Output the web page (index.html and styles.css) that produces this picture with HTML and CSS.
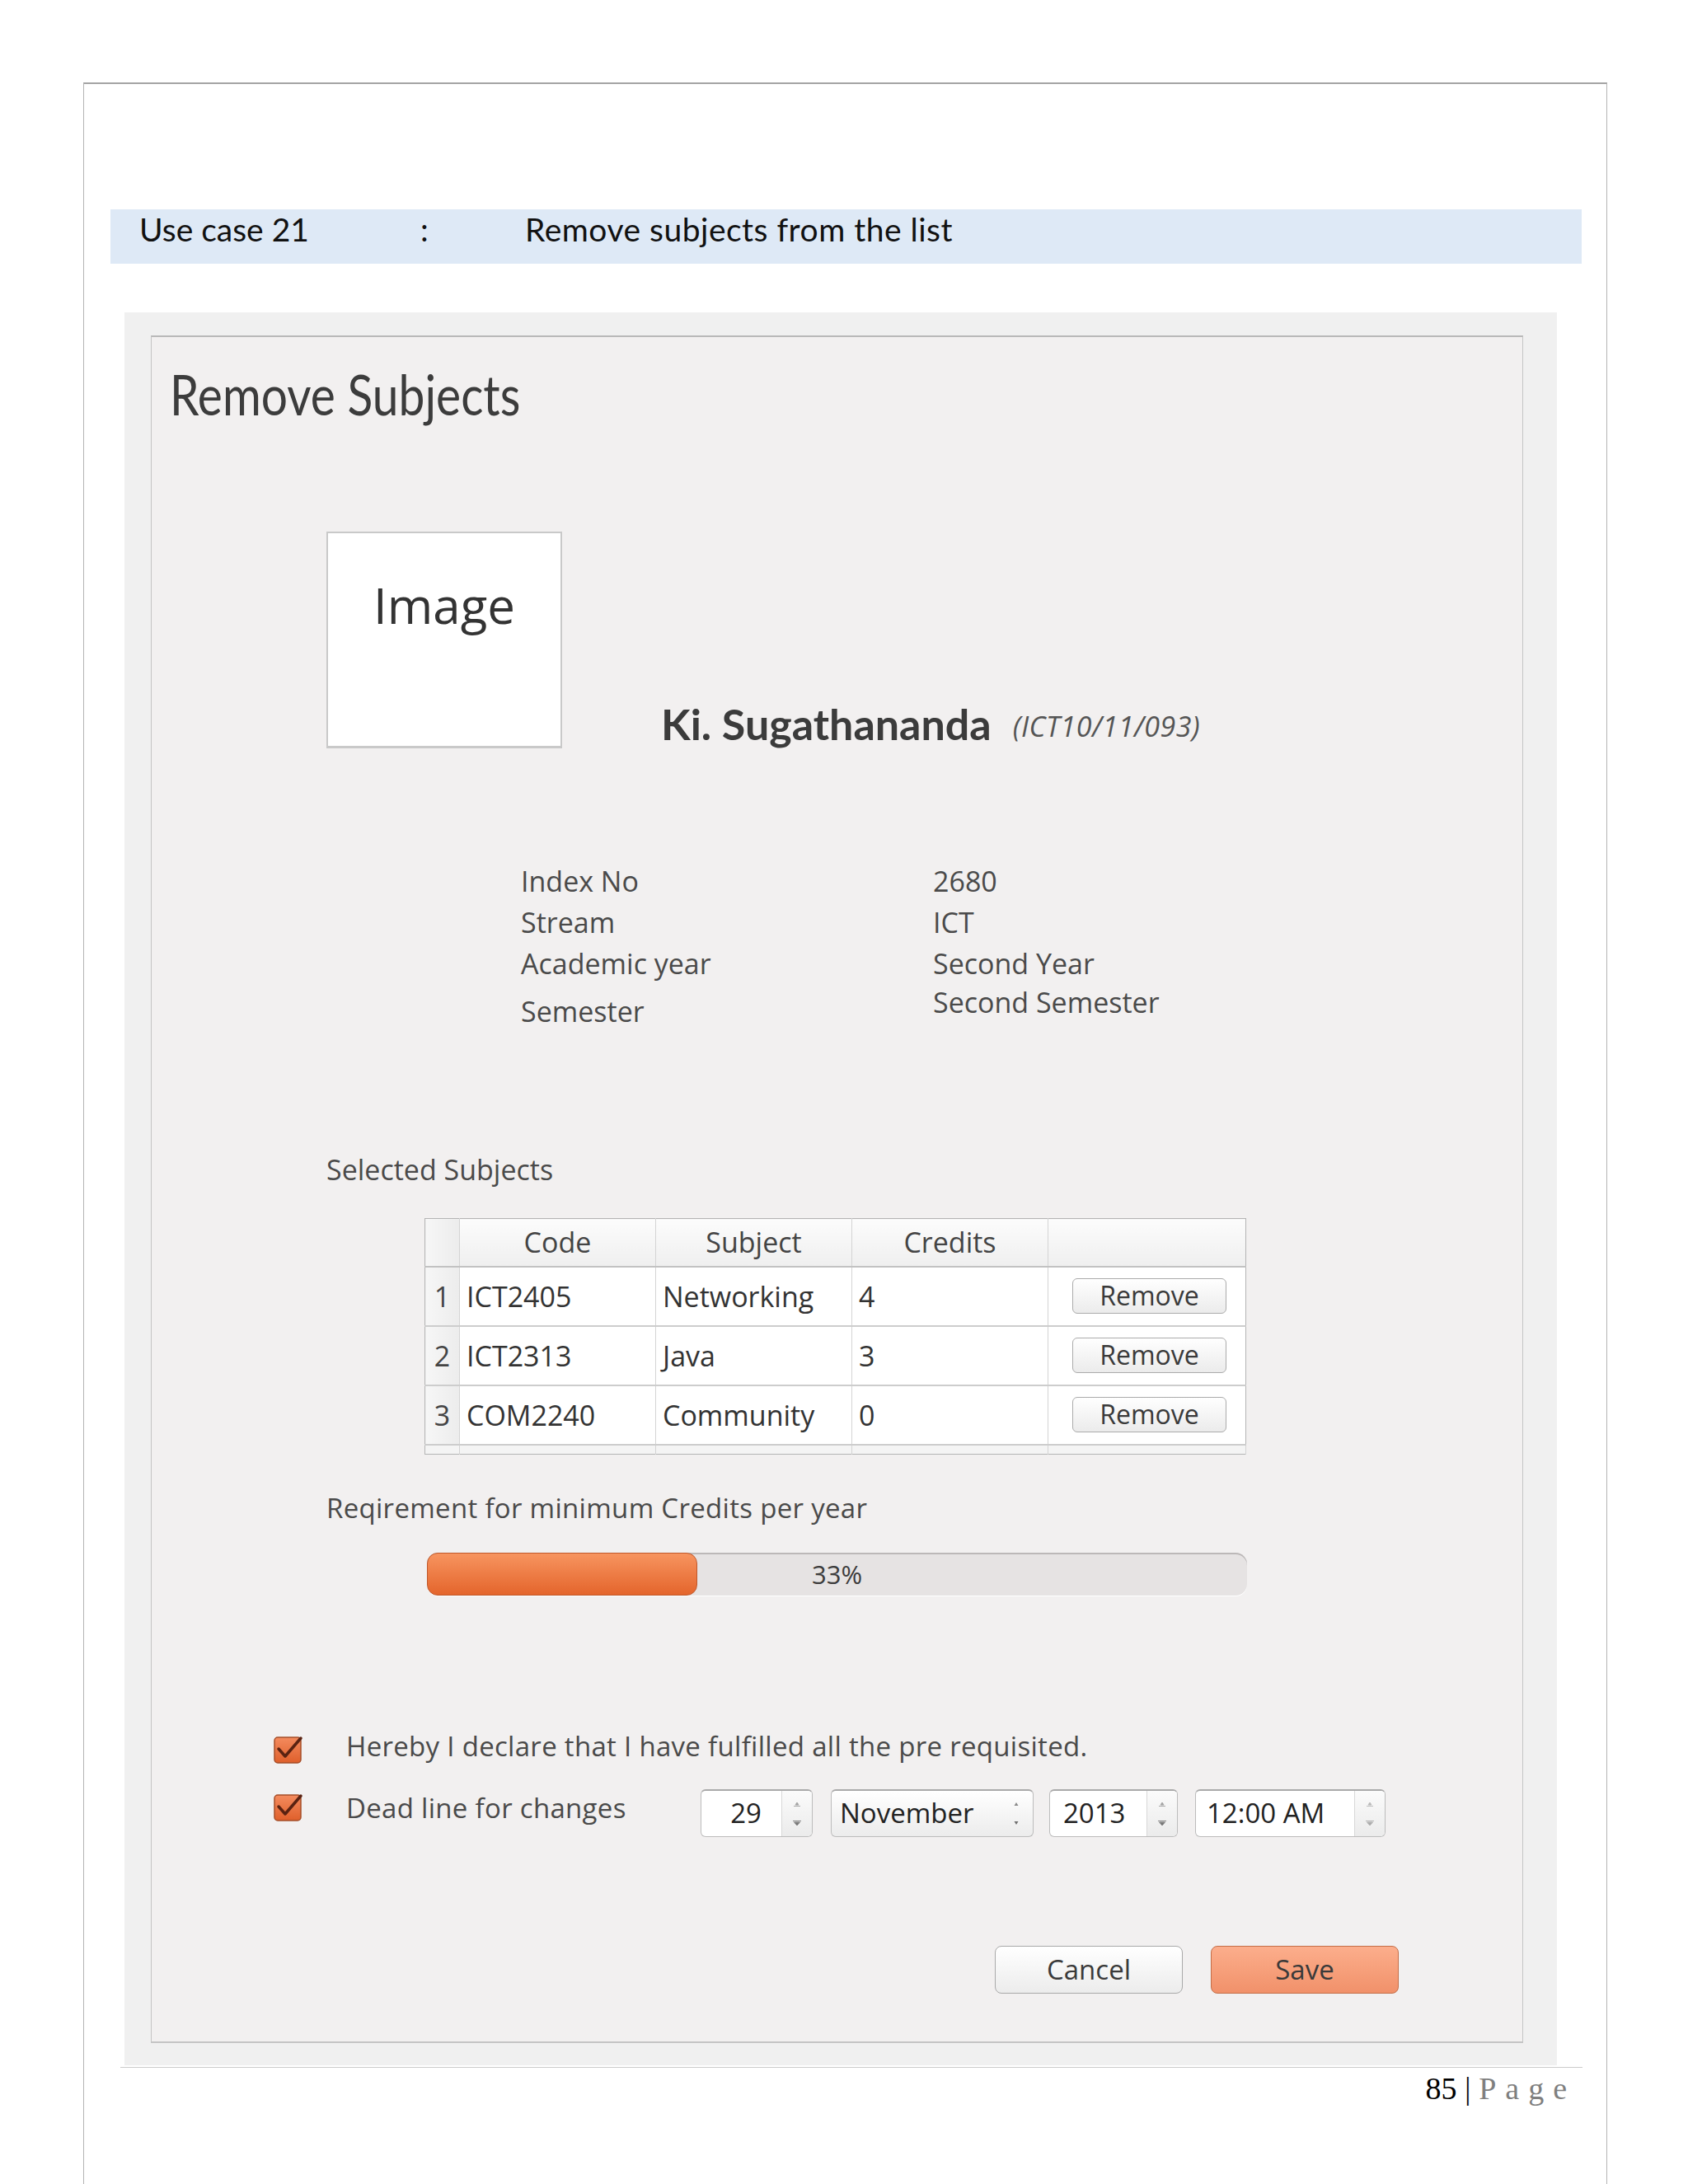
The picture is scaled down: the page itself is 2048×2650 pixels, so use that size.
FILE: index.html
```html
<!DOCTYPE html>
<html>
<head>
<meta charset="utf-8">
<link rel="stylesheet" href="styles.css">
</head>
<body>
<div class="frame">
  <div class="usecase">
    <span class="uc-label">Use case 21</span><span class="uc-colon">:</span><span class="uc-title">Remove subjects from the list</span>
  </div>

  <div class="panel">
    <div class="window">
      <h1 class="title"><span>Remove Subjects</span></h1>

      <div class="profile">
        <div class="photo"><span>Image</span></div>
        <div class="name">Ki. Sugathananda<span class="sid">(ICT10/11/093)</span></div>
      </div>

      <div class="info">
        <div>Index No</div><div>2680</div>
        <div>Stream</div><div>ICT</div>
        <div>Academic year</div><div>Second Year</div>
        <div class="lower">Semester</div><div class="upper">Second Semester</div>
      </div>

      <div class="section-label">Selected Subjects</div>

      <table class="subjects">
        <colgroup>
          <col class="c-num"><col class="c-col"><col class="c-col"><col class="c-col"><col>
        </colgroup>
        <thead>
          <tr><th class="num"></th><th>Code</th><th>Subject</th><th>Credits</th><th></th></tr>
        </thead>
        <tbody>
          <tr><td class="num">1</td><td>ICT2405</td><td>Networking</td><td>4</td><td class="act"><span class="remove">Remove</span></td></tr>
          <tr><td class="num">2</td><td>ICT2313</td><td>Java</td><td>3</td><td class="act"><span class="remove">Remove</span></td></tr>
          <tr><td class="num">3</td><td>COM2240</td><td>Community</td><td>0</td><td class="act"><span class="remove">Remove</span></td></tr>
          <tr class="strip"><td class="num"></td><td></td><td></td><td></td><td></td></tr>
        </tbody>
      </table>

      <div class="section-label progress-label">Reqirement for minimum Credits per year</div>
      <div class="progress">
        <div class="fill" style="width:33%"></div>
        <div class="pct">33%</div>
      </div>

      <div class="check-row row1">
        <svg class="cbox" width="38" height="35" viewBox="0 0 38 35">
          <defs><linearGradient id="cbA" x1="0" y1="0" x2="0" y2="1"><stop offset="0" stop-color="#f48b5e"/><stop offset="1" stop-color="#df5f2b"/></linearGradient></defs>
          <rect x="1" y="2" width="32" height="31" rx="4" fill="url(#cbA)" stroke="#a54d28" stroke-width="1.5"/>
          <path d="M6 16 L14 25 L33 3" fill="none" stroke="#5a2211" stroke-width="3.5" stroke-linecap="round" stroke-linejoin="round"/>
        </svg>
        <span class="check-text">Hereby I declare that I have fulfilled all the pre requisited.</span>
      </div>

      <div class="check-row row2">
        <svg class="cbox" width="38" height="35" viewBox="0 0 38 35">
          <defs><linearGradient id="cbB" x1="0" y1="0" x2="0" y2="1"><stop offset="0" stop-color="#f48b5e"/><stop offset="1" stop-color="#df5f2b"/></linearGradient></defs>
          <rect x="1" y="2" width="32" height="31" rx="4" fill="url(#cbB)" stroke="#a54d28" stroke-width="1.5"/>
          <path d="M6 16 L14 25 L33 3" fill="none" stroke="#5a2211" stroke-width="3.5" stroke-linecap="round" stroke-linejoin="round"/>
        </svg>
        <span class="check-text deadline">Dead line for changes</span>

        <div class="spin s-day">
          <span class="val right">29</span>
          <span class="arrows">
            <svg width="12" height="8" viewBox="0 0 12 8"><path d="M4 5 L6 2 L8 5 Z M2 6.5 H10" fill="#9c9c9c" stroke="#a8a8a8" stroke-width="1"/></svg>
            <svg width="14" height="8" viewBox="0 0 14 8"><path d="M2 1.5 H12 M3.5 3 L7 7 L10.5 3 Z" fill="#777" stroke="#888" stroke-width="1"/></svg>
          </span>
        </div>
        <div class="spin combo s-month">
          <span class="val">November</span>
          <span class="arrows plain">
            <svg width="12" height="8" viewBox="0 0 12 8"><path d="M3.5 6 L6 2 L8.5 6 Z" fill="#8a8a8a"/></svg>
            <svg width="12" height="8" viewBox="0 0 12 8"><path d="M3.5 2 L6 6 L8.5 2 Z" fill="#6f6f6f"/></svg>
          </span>
        </div>
        <div class="spin s-year">
          <span class="val">2013</span>
          <span class="arrows">
            <svg width="12" height="8" viewBox="0 0 12 8"><path d="M4 5 L6 2 L8 5 Z M2 6.5 H10" fill="#9c9c9c" stroke="#a8a8a8" stroke-width="1"/></svg>
            <svg width="14" height="8" viewBox="0 0 14 8"><path d="M2 1.5 H12 M3.5 3 L7 7 L10.5 3 Z" fill="#777" stroke="#888" stroke-width="1"/></svg>
          </span>
        </div>
        <div class="spin s-time">
          <span class="val">12:00 AM</span>
          <span class="arrows">
            <svg width="12" height="8" viewBox="0 0 12 8"><path d="M4 5 L6 2 L8 5 Z M2 6.5 H10" fill="#b4b4b4" stroke="#bdbdbd" stroke-width="1"/></svg>
            <svg width="14" height="8" viewBox="0 0 14 8"><path d="M2 1.5 H12 M3.5 3 L7 7 L10.5 3 Z" fill="#aaa" stroke="#b4b4b4" stroke-width="1"/></svg>
          </span>
        </div>
      </div>

      <div class="actions">
        <span class="btn cancel">Cancel</span>
        <span class="btn save">Save</span>
      </div>
    </div>
  </div>

  <div class="rule"></div>
  <div class="footer"><span class="pn">85</span> <span class="bar">|</span> <span class="pg">Page</span></div>
</div>
</body>
</html>
```
FILE: styles.css
```css
html, body {
  margin: 0;
  padding: 0;
  background: #ffffff;
}

body {
  font-family: "Open Sans", "Lato", "DejaVu Sans", sans-serif;
  color: #3a3a3a;
}

.frame {
  box-sizing: border-box;
  margin-left: 101px;
  margin-top: 100px;
  width: 1849px;
  min-height: 2550px;
  border-top: 2px solid #a4a4a4;
  border-left: 1px solid #b4b4b4;
  border-right: 1px solid #b4b4b4;
  overflow: hidden;
}

/* use case band */
.usecase {
  margin-top: 152px;
  margin-left: 32px;
  width: 1785px;
  height: 66px;
  box-sizing: border-box;
  padding-left: 35px;
  background: #dee9f6;
  font-family: "Lato", "Liberation Sans", sans-serif;
  font-size: 39px;
  line-height: 48px;
  color: #111;
  display: flex;
  white-space: nowrap;
}
.uc-label { width: 341px; }
.uc-colon { width: 127px; }
.uc-title { letter-spacing: 0.5px; }

/* grey panel */
.panel {
  margin-top: 59px;
  margin-left: 49px;
  width: 1738px;
  box-sizing: border-box;
  padding: 28px 41px 27px 32px;
  background: #f0f0f0;
}

.window {
  background: #f2f0f0;
  border-top: 2px solid #b9b9b9;
  border-left: 1px solid #c4c4c4;
  border-right: 1px solid #c4c4c4;
  border-bottom: 2px solid #c4c4c4;
  padding-bottom: 58px;
}

.title {
  margin: 29px 0 0 22px;
  height: 80px;
  font-family: "Lato", sans-serif;
  font-size: 67px;
  line-height: 80px;
  font-weight: 400;
  color: #3c3c3c;
  white-space: nowrap;
}
.title span {
  display: inline-block;
  transform: scaleX(0.85);
  transform-origin: left center;
}

/* profile */
.profile {
  display: flex;
  margin-top: 127px;
  margin-left: 212px;
}
.photo {
  box-sizing: border-box;
  width: 286px;
  height: 263px;
  background: #fff;
  border: 2px solid #c9c9c9;
  border-bottom-width: 3px;
  text-align: center;
  padding-top: 52px;
}
.photo span {
  font-size: 60px;
  line-height: 70px;
  color: #333;
}
.name {
  align-self: flex-end;
  margin-left: 120px;
  font-family: "Lato", sans-serif;
  font-size: 52px;
  line-height: 54px;
  font-weight: 700;
  color: #3b3b3b;
  white-space: nowrap;
}
.sid {
  margin-left: 26px;
  font-family: "Open Sans", sans-serif;
  font-size: 34px;
  letter-spacing: 0.5px;
  font-style: italic;
  font-weight: 400;
  color: #555;
  vertical-align: 4px;
}

/* info grid */
.info {
  display: grid;
  grid-template-columns: 500px auto;
  align-items: start;
  margin-top: 136px;
  margin-left: 448px;
  font-size: 34px;
  line-height: 50px;
  color: #4a4a4a;
}
.info .lower { padding-top: 8px; }
.info .upper { margin-top: -3px; }

.section-label {
  margin-top: 142px;
  margin-left: 212px;
  font-size: 34px;
  line-height: 50px;
  color: #4a4a4a;
}

/* table */
.subjects {
  margin-top: 34px;
  margin-left: 331px;
  width: 997px;
  table-layout: fixed;
  border-collapse: collapse;
  background: #fff;
  border: 1px solid #b4b4b4;
  font-size: 34px;
  color: #333;
}
.subjects .c-num { width: 42px; }
.subjects .c-col { width: 238px; }
.subjects th {
  height: 57px;
  padding: 0;
  font-weight: 400;
  text-align: center;
  color: #444;
  background: linear-gradient(#fcfcfc, #efefef);
  border-right: 1px solid #d4d4d4;
  border-bottom: 2px solid #c2c2c2;
  line-height: 57px;
}
.subjects td {
  height: 70px;
  padding: 0 0 0 8px;
  line-height: 70px;
  border-right: 1px solid #d4d4d4;
  border-bottom: 2px solid #cdcdcd;
  white-space: nowrap;
  vertical-align: middle;
}
.subjects .num {
  padding: 0;
  text-align: center;
  background: linear-gradient(90deg, #f6f6f6, #ececec);
  color: #444;
}
.subjects td.act {
  padding: 0;
  border-right: none;
  line-height: normal;
}
.subjects th:last-child { border-right: none; }
.subjects tr.strip td {
  height: 10px;
  line-height: 10px;
  border-bottom: none;
  background: #f4f4f4;
}
.remove {
  display: block;
  box-sizing: border-box;
  width: 187px;
  height: 43px;
  margin: 0 0 1px 29px;
  border: 1px solid #ababab;
  border-radius: 6px;
  background: linear-gradient(#ffffff, #ebebeb);
  text-align: center;
  font-size: 32px;
  line-height: 40px;
  color: #3a3a3a;
}

/* progress */
.progress-label {
  margin-top: 40px;
  font-size: 33px;
  letter-spacing: 0.3px;
}
.progress {
  position: relative;
  margin-top: 29px;
  margin-left: 334px;
  width: 995px;
  height: 52px;
  border-radius: 14px;
  background: #e6e3e3;
  box-shadow: inset 0 2px 0 #bcb8b8, 0 1px 0 #ffffff;
}
.fill {
  box-sizing: border-box;
  height: 100%;
  border: 1px solid #c0582b;
  border-radius: 13px;
  background: linear-gradient(#f7945f, #e4652c);
}
.pct {
  position: absolute;
  left: 0;
  right: 0;
  top: 0;
  text-align: center;
  font-size: 31px;
  line-height: 52px;
  color: #3c3c3c;
}

/* checkboxes */
.check-row {
  display: flex;
  align-items: flex-start;
  margin-left: 148px;
}
.row1 { margin-top: 158px; }
.row2 { margin-top: 27px; }
.row1 .cbox { margin-top: 12px; }
.row2 .cbox { margin-top: 5px; }
.check-text {
  margin-left: 50px;
  font-size: 33px;
  letter-spacing: 0.3px;
  line-height: 50px;
  color: #4a4a4a;
  white-space: nowrap;
}
.deadline {
  width: 430px;
  margin-top: -2px;
  flex: none;
}

/* spin boxes */
.spin {
  box-sizing: border-box;
  display: flex;
  height: 58px;
  background: #fff;
  border: 1px solid #bcbcbc;
  border-top: 2px solid #a9a9a9;
  border-radius: 6px;
  overflow: hidden;
  flex: none;
}
.s-day { width: 136px; }
.s-month { width: 246px; margin-left: 22px; }
.s-year { width: 156px; margin-left: 19px; }
.s-time { width: 231px; margin-left: 21px; }
.spin .val {
  flex: 1;
  font-size: 33px;
  line-height: 54px;
  color: #222;
  padding-left: 13px;
  white-space: nowrap;
}
.spin .val.right {
  text-align: right;
  padding-right: 24px;
  padding-left: 0;
}
.s-year .val { padding-left: 16px; }
.s-month .val { padding-left: 10px; }
.arrows {
  width: 37px;
  flex: none;
  display: flex;
  flex-direction: column;
  align-items: center;
  justify-content: space-around;
  padding: 4px 0;
  box-sizing: border-box;
  border-left: 1px solid #d8d8d8;
  background: linear-gradient(#fbfbfb, #ebebeb);
}
.combo {
  background: linear-gradient(#ffffff, #ececec);
}
.arrows.plain {
  border-left: none;
  background: transparent;
  width: 40px;
}

/* buttons */
.actions {
  display: flex;
  gap: 34px;
  margin-top: 132px;
  margin-left: 1023px;
}
.btn {
  box-sizing: border-box;
  width: 228px;
  height: 58px;
  border-radius: 8px;
  text-align: center;
  font-size: 33px;
  line-height: 56px;
  color: #3a3a3a;
}
.cancel {
  border: 1px solid #a9a9a9;
  background: linear-gradient(#ffffff, #ececec);
}
.save {
  border: 1px solid #c46d47;
  background: linear-gradient(#fcae8c, #f1916a);
}

/* footer */
.rule {
  margin-top: 2px;
  margin-left: 44px;
  width: 1774px;
  height: 1px;
  background: #cbcbcb;
}
.footer {
  margin-top: 4px;
  margin-left: 44px;
  width: 1774px;
  box-sizing: border-box;
  padding-right: 8px;
  text-align: right;
  font-family: "Liberation Serif", "Times New Roman", serif;
  font-size: 38px;
  line-height: 42px;
  color: #000;
  white-space: pre;
}
.bar { color: #111; }
.pg {
  color: #7f7f7f;
  letter-spacing: 11px;
}
```
